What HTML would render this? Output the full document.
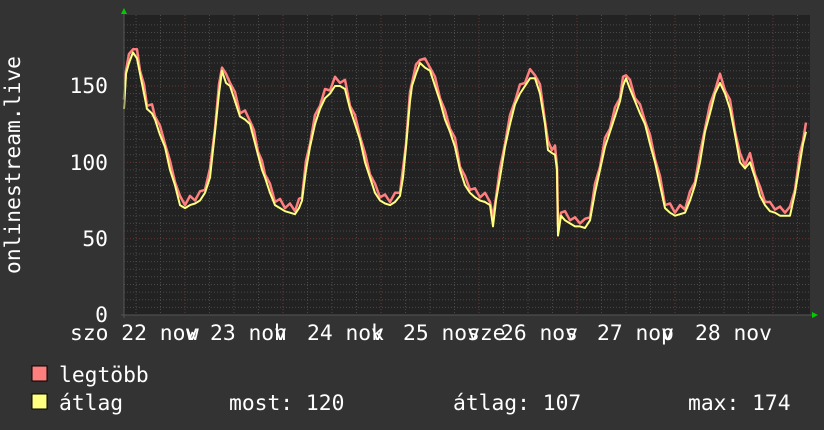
<!DOCTYPE html>
<html><head><meta charset="utf-8"><style>
html,body{margin:0;padding:0;background:#333;}
svg{display:block;}
text{font-family:"DejaVu Sans Mono","Liberation Mono",monospace;font-size:21.3px;fill:#fff;}
</style></head><body>
<svg id="s" width="824" height="430" xmlns="http://www.w3.org/2000/svg">
<rect width="824" height="430" fill="#333"/>
<rect x="124" y="15" width="686" height="300" fill="#222"/>
<g id="grid"></g>
<polyline id="red" fill="none" stroke="#ff7f7f" stroke-width="2.5" stroke-linejoin="round"/>
<polyline id="yel" fill="none" stroke="#ffff80" stroke-width="2" stroke-linejoin="round"/>
<line x1="124" y1="12" x2="124" y2="318" stroke="#555" stroke-width="1"/>
<line x1="121" y1="315" x2="812" y2="315" stroke="#555" stroke-width="1"/>
<polygon points="121,14 127,14 124,8" fill="#0c0"/>
<polygon points="812,312 812,318 818,315" fill="#0c0"/>
<g text-anchor="end">
<text x="108" y="93">150</text>
<text x="108" y="170">100</text>
<text x="108" y="246">50</text>
<text x="108" y="322">0</text>
</g>
<text transform="translate(20,165) rotate(-90)" text-anchor="middle">onlinestream.live</text>
<text x="70" y="340">szo 22 nov</text>
<text x="186" y="340">w</text>
<text x="210" y="340">23 nov</text>
<text x="274" y="340">h</text>
<text x="307" y="340">24 nov</text>
<text x="371" y="340">k</text>
<text x="403" y="340">25 nov</text>
<text x="467" y="340">sze</text>
<text x="501" y="340">26 nov</text>
<text x="565" y="340">s</text>
<text x="597" y="340">27 nov</text>
<text x="661" y="340">p</text>
<text x="695" y="340">28 nov</text>
<rect x="32" y="366" width="15" height="15" fill="#ff7f7f" stroke="#000" stroke-width="1"/>
<rect x="32" y="394" width="15" height="15" fill="#ffff80" stroke="#000" stroke-width="1"/>
<text x="59" y="382">legtöbb</text>
<text x="59" y="410">átlag</text>
<text x="229" y="410">most: 120</text>
<text x="453" y="410">átlag: 107</text>
<text x="688" y="410">max: 174</text>
</svg>
<script>
var g=document.getElementById('grid'),h='';
for(var v=5;v<=190;v+=5){var y=315-v*1.527;var maj=(v%50==0);
h+='<line x1="124" x2="810" y1="'+y.toFixed(1)+'" y2="'+y.toFixed(1)+'" stroke="'+(maj?'#6a3535':'#4a4a4a')+'" stroke-dasharray="1,2"/>';}
for(var k=-2;k<30;k++){var x=185+k*24.5;if(x<=125||x>=810)continue;var maj=(k%4==0);
h+='<line y1="15" y2="315" x1="'+x.toFixed(1)+'" x2="'+x.toFixed(1)+'" stroke="'+(maj?'#6a3535':'#4a4a4a')+'" stroke-dasharray="1,2"/>';}
g.innerHTML=h;
var d=[124,135,126,158,129,165,133,172,137,168,140,158,144,145,147,135,152,132,155,128,160,118,165,110,170,95,175,85,180,72,185,70,190,72,195,73,200,75,205,80,210,90,215,120,219,145,222,160,226,152,230,150,235,140,240,130,245,128,250,125,254,115,258,105,262,95,265,90,270,80,275,72,280,70,285,68,290,67,295,66,299,70,302,75,306,95,310,110,315,125,320,135,325,142,330,145,335,150,340,150,345,148,350,135,355,125,360,115,365,100,370,90,375,80,380,75,385,73,390,72,395,74,400,78,403,90,406,110,410,140,412,150,416,158,420,165,425,162,430,160,435,150,440,140,445,128,450,120,455,110,460,95,465,85,470,80,475,77,480,75,485,74,490,72,493,58,496,75,500,90,505,110,510,125,515,138,520,145,525,150,530,155,535,155,540,145,545,125,548,108,552,106,555,105,557,95,558,52,561,65,565,62,570,60,575,58,580,58,585,57,590,62,595,80,600,95,605,110,610,120,615,130,620,140,623,150,626,155,630,148,635,140,640,132,645,125,650,112,655,100,660,85,665,70,670,67,675,65,680,66,685,67,690,75,695,85,700,100,705,120,710,132,715,145,720,152,725,145,730,135,735,118,740,100,745,96,750,100,755,90,760,78,765,72,770,68,775,67,780,65,785,65,790,65,795,80,800,100,803,112,806,120];
var r='',yl='';
for(var i=0;i<d.length;i+=2){var x=d[i],v=d[i+1];var j=(i%4==0)?1:-1;
yl+=x+','+(315-v*1.527).toFixed(1)+' ';
r+=x+','+(315-(v+4+j*2)*1.527).toFixed(1)+' ';}
document.getElementById('red').setAttribute('points',r);
document.getElementById('yel').setAttribute('points',yl);
</script>
</body></html>
